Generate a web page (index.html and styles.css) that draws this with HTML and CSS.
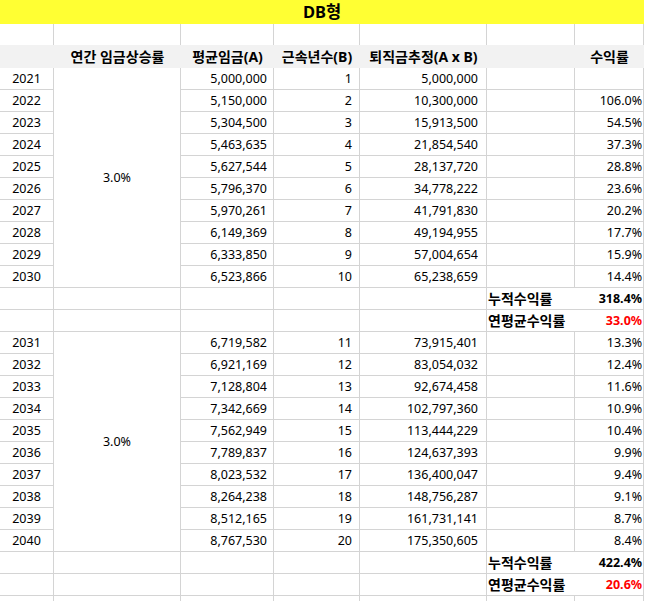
FILE: index.html
```html
<!DOCTYPE html>
<html lang="ko">
<head>
<meta charset="utf-8">
<title>DB형</title>
<link rel="stylesheet" href="styles.css">
</head>
<body>
<table class="sheet">
  <colgroup>
    <col class="w-a"><col class="w-b"><col class="w-c"><col class="w-d"><col class="w-e"><col class="w-f"><col class="w-g">
  </colgroup>
  <tr class="title"><td colspan="7">DB형</td></tr>
  <tr class="blank"><td></td><td></td><td></td><td></td><td></td><td></td><td></td></tr>
  <tr class="head"><td></td><td>연간 임금상승률</td><td>평균임금(A)</td><td>근속년수(B)</td><td>퇴직금추정(A x B)</td><td></td><td>수익률</td></tr>

  <tr><td class="yr">2021</td><td class="rate" rowspan="10">3.0%</td><td class="nc">5,000,000</td><td class="nd">1</td><td class="ne">5,000,000</td><td></td><td class="pct"></td></tr>
  <tr><td class="yr">2022</td><td class="nc">5,150,000</td><td class="nd">2</td><td class="ne">10,300,000</td><td></td><td class="pct">106.0%</td></tr>
  <tr><td class="yr">2023</td><td class="nc">5,304,500</td><td class="nd">3</td><td class="ne">15,913,500</td><td></td><td class="pct">54.5%</td></tr>
  <tr><td class="yr">2024</td><td class="nc">5,463,635</td><td class="nd">4</td><td class="ne">21,854,540</td><td></td><td class="pct">37.3%</td></tr>
  <tr><td class="yr">2025</td><td class="nc">5,627,544</td><td class="nd">5</td><td class="ne">28,137,720</td><td></td><td class="pct">28.8%</td></tr>
  <tr><td class="yr">2026</td><td class="nc">5,796,370</td><td class="nd">6</td><td class="ne">34,778,222</td><td></td><td class="pct">23.6%</td></tr>
  <tr><td class="yr">2027</td><td class="nc">5,970,261</td><td class="nd">7</td><td class="ne">41,791,830</td><td></td><td class="pct">20.2%</td></tr>
  <tr><td class="yr">2028</td><td class="nc">6,149,369</td><td class="nd">8</td><td class="ne">49,194,955</td><td></td><td class="pct">17.7%</td></tr>
  <tr><td class="yr">2029</td><td class="nc">6,333,850</td><td class="nd">9</td><td class="ne">57,004,654</td><td></td><td class="pct">15.9%</td></tr>
  <tr><td class="yr">2030</td><td class="nc">6,523,866</td><td class="nd">10</td><td class="ne">65,238,659</td><td></td><td class="pct">14.4%</td></tr>
  <tr><td></td><td></td><td></td><td></td><td></td><td class="lbl">누적수익률</td><td class="pct strong">318.4%</td></tr>
  <tr><td></td><td></td><td></td><td></td><td></td><td class="lbl">연평균수익률</td><td class="pct strong red">33.0%</td></tr>

  <tr><td class="yr">2031</td><td class="rate" rowspan="10">3.0%</td><td class="nc">6,719,582</td><td class="nd">11</td><td class="ne">73,915,401</td><td></td><td class="pct">13.3%</td></tr>
  <tr><td class="yr">2032</td><td class="nc">6,921,169</td><td class="nd">12</td><td class="ne">83,054,032</td><td></td><td class="pct">12.4%</td></tr>
  <tr><td class="yr">2033</td><td class="nc">7,128,804</td><td class="nd">13</td><td class="ne">92,674,458</td><td></td><td class="pct">11.6%</td></tr>
  <tr><td class="yr">2034</td><td class="nc">7,342,669</td><td class="nd">14</td><td class="ne">102,797,360</td><td></td><td class="pct">10.9%</td></tr>
  <tr><td class="yr">2035</td><td class="nc">7,562,949</td><td class="nd">15</td><td class="ne">113,444,229</td><td></td><td class="pct">10.4%</td></tr>
  <tr><td class="yr">2036</td><td class="nc">7,789,837</td><td class="nd">16</td><td class="ne">124,637,393</td><td></td><td class="pct">9.9%</td></tr>
  <tr><td class="yr">2037</td><td class="nc">8,023,532</td><td class="nd">17</td><td class="ne">136,400,047</td><td></td><td class="pct">9.4%</td></tr>
  <tr><td class="yr">2038</td><td class="nc">8,264,238</td><td class="nd">18</td><td class="ne">148,756,287</td><td></td><td class="pct">9.1%</td></tr>
  <tr><td class="yr">2039</td><td class="nc">8,512,165</td><td class="nd">19</td><td class="ne">161,731,141</td><td></td><td class="pct">8.7%</td></tr>
  <tr><td class="yr">2040</td><td class="nc">8,767,530</td><td class="nd">20</td><td class="ne">175,350,605</td><td></td><td class="pct">8.4%</td></tr>
  <tr><td></td><td></td><td></td><td></td><td></td><td class="lbl">누적수익률</td><td class="pct strong">422.4%</td></tr>
  <tr><td></td><td></td><td></td><td></td><td></td><td class="lbl">연평균수익률</td><td class="pct strong red">20.6%</td></tr>
  <tr><td></td><td></td><td></td><td></td><td></td><td></td><td></td></tr>
</table>
</body>
</html>
```

FILE: styles.css
```css
html, body {
  margin: 0;
  padding: 0;
  background: #ffffff;
}

body {
  font-family: "Noto Sans", "Noto Sans CJK KR", sans-serif;
  font-size: 12.5px;
  color: #000000;
}

.sheet {
  border-collapse: separate;
  border-spacing: 0;
  table-layout: fixed;
  width: 644px;
}

.w-a { width: 54px; }
.w-b { width: 127px; }
.w-c { width: 93px; }
.w-d { width: 86px; }
.w-e { width: 127px; }
.w-f { width: 88px; }
.w-g { width: 69px; }

.sheet td {
  padding: 0;
  height: 21px;
  line-height: 21px;
  border-right: 1px solid #d4d4d4;
  border-bottom: 1px solid #d4d4d4;
  white-space: nowrap;
  overflow: visible;
  vertical-align: middle;
}

.title td {
  height: 24px;
  line-height: 24px;
  background: #ffff33;
  border: none;
  text-align: center;
  font-weight: 700;
  font-size: 16.5px;
}

.blank td {
  height: 21px;
  border-bottom: none;
}

.head td {
  height: 23px;
  line-height: 23px;
  background: #f2f2f2;
  border: none;
  text-align: center;
  font-weight: 700;
  font-size: 14px;
}

.yr { text-align: center; }
.rate { text-align: center; }
.nc { text-align: right; padding-right: 6px !important; }
.nd { text-align: right; padding-right: 7px !important; }
.ne { text-align: right; padding-right: 8px !important; }
.pct { text-align: right; padding-right: 1px !important; }

.sheet td.lbl {
  border-right: none;
  padding-left: 1px;
  font-weight: 700;
  font-size: 14px;
}

.strong { font-weight: 700; }
.red { color: #ff0000; }
```
